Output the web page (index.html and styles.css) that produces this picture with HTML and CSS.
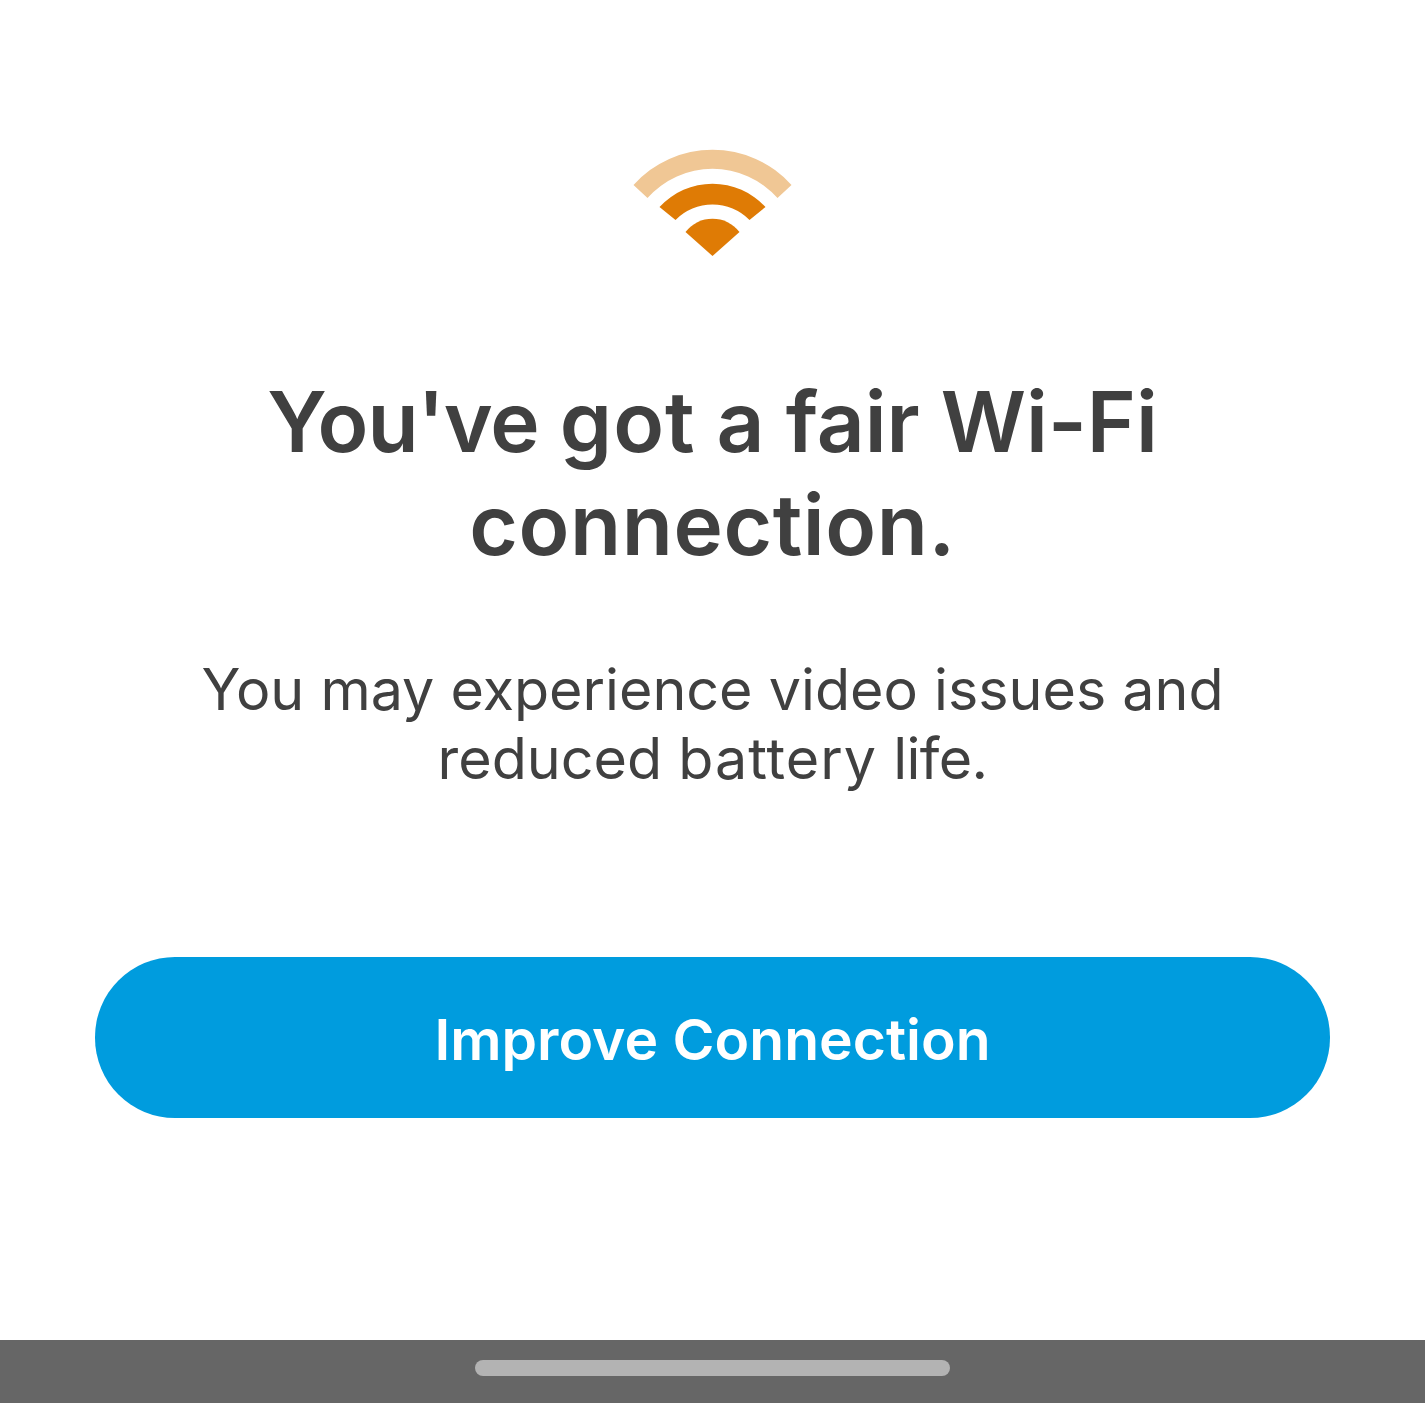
FILE: index.html
```html
<!DOCTYPE html>
<html lang="en">
<head>
    <meta charset="UTF-8">
    <title>Wi-Fi Connection</title>

    <link rel="stylesheet" href="styles.css">
</head>

<body>
<div class="screen">
    <div class="content">
        <svg class="wifiIcon" width="200" height="120" viewBox="0.5 0 200 120">
            <path class="wifiFaded" d="M21 55 A106 106 0 0 1 179 55 L165 68 A87 87 0 0 0 35 68 Z"/>
            <path class="wifiSolid" d="M47 77 A72 72 0 0 1 153 77 L137 90 A52 52 0 0 0 63 90 Z"/>
            <path class="wifiSolid" d="M73 102 A34 34 0 0 1 127 102 L100 126 Z"/>
        </svg>

        <h1 class="title"><span class="tighter">You've</span> <span class="wider">got</span> a fair Wi-Fi <span class="wide">connection.</span></h1>

        <p class="message">You may experience video issues and<br>reduced <span class="wider">battery</span> <span class="tight">life.</span></p>

        <button class="improveButton">Improve Connection</button>
    </div>

    <div class="homeBar">
        <div class="homeHandle"></div>
    </div>
</div>
</body>
</html>
```

FILE: styles.css
```css
body {
    margin: 0;
    background-color: #FFFFFF;
    font-family: Inter, "Liberation Sans", sans-serif;
}

.screen {
    height: 1403px;
    display: flex;
    flex-direction: column;
}

.content {
    flex: 1;
    display: flex;
    flex-direction: column;
    align-items: center;
    padding: 130px 95px 0;
}

.wifiIcon {
    overflow: visible;
}

.wifiFaded {
    fill: #F0C795;
}

.wifiSolid {
    fill: #DF7B05;
}

.title {
    width: 1000px;
    margin: 120px 0 0;
    font-size: 83.6px;
    font-weight: 600;
    line-height: 103px;
    text-align: center;
    color: #404040;
}

.message {
    width: 1060px;
    margin: 79px 0 0;
    font-size: 57.4px;
    font-weight: 400;
    line-height: 69px;
    text-align: center;
    color: #404040;
}

/* word widths differ a little from the installed Inter */
.tighter {
    letter-spacing: -1px;
}

.tight {
    letter-spacing: -0.6px;
}

.wide {
    letter-spacing: 0.6px;
}

.wider {
    letter-spacing: 1px;
}

.improveButton {
    width: 100%;
    height: 161px;
    margin-top: 164px;
    padding: 4px 0 0;
    border: none;
    border-radius: 80px;
    background-color: #009CDE;
    color: #FFFFFF;
    font-family: Inter, "Liberation Sans", sans-serif;
    font-size: 57px;
    font-weight: 600;
}

.homeBar {
    height: 63px;
    background-color: #666666;
    display: flex;
    justify-content: center;
    padding-top: 20px;
    box-sizing: border-box;
}

.homeHandle {
    width: 475px;
    height: 16px;
    border-radius: 8px;
    background-color: #B3B3B3;
}
```
